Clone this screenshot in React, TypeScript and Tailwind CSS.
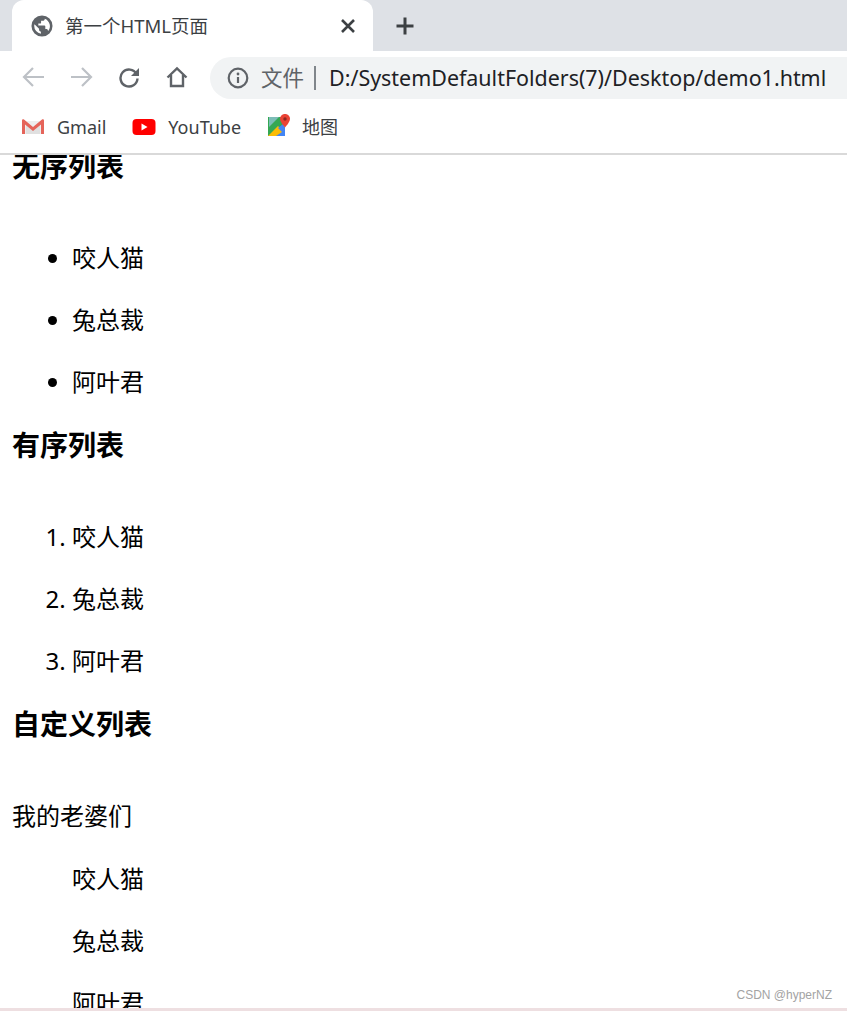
const cjk = "font-['Noto_Sans','Noto_Sans_CJK_SC',sans-serif]";

function Globe() {
  return (
    <svg width="22" height="22" viewBox="0 0 24 24">
      <path fill="#5f6368" d="M12 .5a11.500 11.500 0 1 0 0 23 11.500 11.500 0 0 0 0-23zM3.500 12c0-.7.1-1.400.3-2l5 5v1c0 1.100.9 2 2 2v2.500A8.700 8.700 0 0 1 3.500 12zm15 4.800c-.3-.8-1-1.400-1.900-1.400h-1v-3c0-.6-.4-1-1-1H8v-2h2c.6 0 1-.4 1-1v-2h2c1.100 0 2-.9 2-2v-.3a8.600 8.600 0 0 1 3.500 13.700z" />
    </svg>
  );
}

function GmailIcon() {
  return (
    <svg width="24" height="18" viewBox="0 0 24 18">
      <path fill="#eeeeee" d="M2 3h20v13H2z" />
      <path fill="#e0e0e0" d="M5 16V6l7 5.500L19 6v10z" />
      <path fill="#e5645a" d="M1 2.500C1 1.500 2 1 3 1.500L12 9l9-7.500c1-.5 2 0 2 1V16h-3V6.500L12 13 4 6.500V16H1z" />
    </svg>
  );
}

function YouTubeIcon() {
  return (
    <svg width="24" height="18" viewBox="0 0 24 18">
      <rect x="0.500" y="1" width="23" height="16" rx="4" fill="#ff0000" />
      <path fill="#ffffff" d="M9.500 5.500 15.500 9l-6 3.500z" />
    </svg>
  );
}

function MapsIcon() {
  return (
    <svg className="-mt-[2px]" width="24" height="24" viewBox="0 0 24 24">
      <path fill="#34a853" d="M1 3h15v9L4 22H1z" />
      <path fill="#fbbc04" d="M1 22 11 12l6 6-3 4z" />
      <path fill="#4285f4" d="M11 14l5-4 2 3v9H9l6-4z" />
      <path fill="#aecbfa" d="M2 3h10L2 13z" opacity="0.6" />
      <path fill="#ea4335" d="M18 0c-3 0-5 2.200-5 4.800 0 3.500 5 8.700 5 8.700s5-5.200 5-8.700C23 2.200 21 0 18 0z" />
      <circle cx="18" cy="5" r="1.700" fill="#8c2a22" />
    </svg>
  );
}

function Bookmark({ icon, label, className }: { icon: React.ReactNode; label: string; className: string }) {
  return (
    <div className={`flex items-center ${className}`}>
      {icon}
      <span className="text-[18px] leading-[24px] text-[#3c4043]">{label}</span>
    </div>
  );
}

function Heading({ children, className = "" }: { children: React.ReactNode; className?: string }) {
  return <h2 className={`text-[28px] leading-[36px] font-bold text-black ${className}`}>{children}</h2>;
}

const names = ["咬人猫", "兔总裁", "阿叶君"];

export default function App() {
  return (
    <div className={`relative h-[1011px] w-[847px] overflow-hidden bg-white flex flex-col ${cjk}`}>
      {/* Tab strip */}
      <div className="flex h-[51px] shrink-0 bg-[#dee1e6] pl-3">
        <div className="flex h-[51px] w-[361px] items-center rounded-t-[12px] bg-white pl-[19px] pr-[17px]">
          <Globe />
          <span className="ml-[12px] flex-1 text-[18.500px] leading-[26px] text-[#3c4043]">第一个HTML页面</span>
          <svg width="16" height="16" viewBox="0 0 16 16" stroke="#3c4043" strokeWidth="2.600" fill="none">
            <path d="M2 2l12 12M14 2 2 14" />
          </svg>
        </div>
        <div className="ml-[22px] flex h-[51px] items-center">
          <svg width="20" height="20" viewBox="0 0 20 20" stroke="#3c4043" strokeWidth="3" fill="none">
            <path d="M10 1.500v17M1.500 10h17" />
          </svg>
        </div>
      </div>

      {/* Toolbar */}
      <div className="flex h-[51px] shrink-0 items-center bg-white pt-[3px]">
        <svg className="ml-[22px] -mt-[2px]" width="23" height="22" viewBox="0 0 23 22" stroke="#bdc1c6" strokeWidth="2.200" fill="none">
          <path d="M22 11H3M11 2l-9 9 9 9" />
        </svg>
        <svg className="ml-[25px] -mt-[2px]" width="23" height="22" viewBox="0 0 23 22" stroke="#bdc1c6" strokeWidth="2.200" fill="none">
          <path d="M1 11h19M12 2l9 9-9 9" />
        </svg>
        <svg className="ml-[25px] -mt-[2px]" width="22" height="22" viewBox="0 0 22 22" fill="none">
          <path d="M18.500 8A8.500 8.500 0 1 0 19.500 12.500" stroke="#5f6368" strokeWidth="2.400" />
          <path d="M21 2v8h-8z" fill="#5f6368" />
        </svg>
        <svg className="ml-[26px] -mt-[2px]" width="22" height="22" viewBox="0 0 22 22" stroke="#5f6368" strokeWidth="2.400" fill="none">
          <path d="M1.500 11.500 11 2.500l9.500 9M5 9v11h12V9" />
        </svg>
        <div className="ml-[22px] flex h-[42px] flex-1 items-center rounded-l-[21px] bg-[#f1f3f4] pl-[17px]">
          <svg width="22" height="22" viewBox="0 0 22 22" fill="none">
            <circle cx="11" cy="11" r="9.300" stroke="#5f6368" strokeWidth="2.200" />
            <path d="M11 10v6" stroke="#5f6368" strokeWidth="2.200" />
            <circle cx="11" cy="7" r="1.400" fill="#5f6368" />
          </svg>
          <span className="ml-[12px] text-[21.500px] leading-[30px] text-[#5f6368]">文件</span>
          <span className="ml-[10px] h-[24px] w-[2px] bg-[#80868b]" />
          <span className="ml-[13px] text-[21.450px] leading-[30px] text-[#202124] whitespace-nowrap">D:/SystemDefaultFolders(7)/Desktop/demo1.html</span>
        </div>
      </div>

      {/* Bookmarks */}
      <div className="flex h-[53px] shrink-0 items-center border-b-2 border-[#d9d9d9] bg-white pb-[2px]">
        <Bookmark className="ml-[21px] gap-[12px]" icon={<GmailIcon />} label="Gmail" />
        <Bookmark className="ml-[26px] gap-[12px]" icon={<YouTubeIcon />} label="YouTube" />
        <Bookmark className="ml-[26px] gap-[11px]" icon={<MapsIcon />} label="地图" />
      </div>

      {/* Page */}
      <div className="flex-1 overflow-hidden border-b-[3px] border-[#eedfe1] pl-3 text-[24px] leading-[30px] text-black">
        <Heading className="-mt-[7px]">无序列表</Heading>
        <ul className="mt-[59px] list-disc pl-[60px] mb-[30px] flex flex-col gap-[32px]">
          {names.map((n) => <li key={n}>{n}</li>)}
        </ul>
        <Heading>有序列表</Heading>
        <ol className="mt-[59px] list-decimal pl-[60px] mb-[30px] flex flex-col gap-[32px]">
          {names.map((n) => <li key={n}>{n}</li>)}
        </ol>
        <Heading>自定义列表</Heading>
        <dl className="mt-[59px] flex flex-col gap-[32px]">
          <dt className="mb-[1px]">我的老婆们</dt>
          {names.map((n) => <dd key={n} className="pl-[60px]">{n}</dd>)}
        </dl>
      </div>

      <span className="absolute right-[15px] top-[987px] font-['Liberation_Sans',sans-serif] text-[12px] leading-[16px] text-[#a3a3a3]">CSDN @hyperNZ</span>
    </div>
  );
}
